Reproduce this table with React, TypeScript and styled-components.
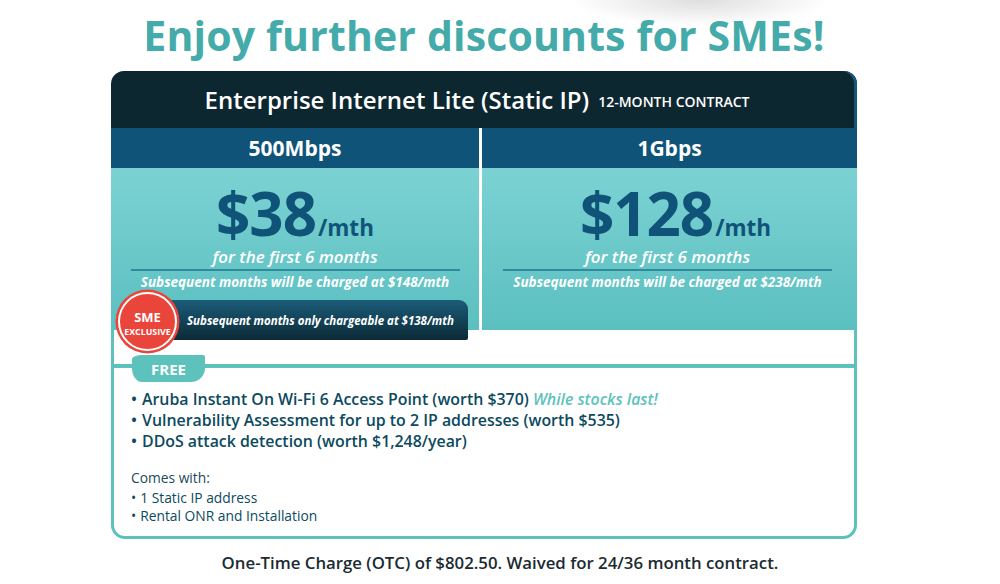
import styled, { createGlobalStyle } from 'styled-components';

const GlobalStyle = createGlobalStyle`
  html, body {
    margin: 0;
    padding: 0;
    background: #fff;
  }
  body {
    font-family: "Open Sans", "Noto Sans", Arial, sans-serif;
  }
`;

const Page = styled.div`
  width: 1000px;
  height: 584px;
  overflow: hidden;
  background: radial-gradient(ellipse 130px 26px at 700px 0px, rgba(0, 0, 0, 0.13), rgba(0, 0, 0, 0) 100%), #fff;
`;

const Column = styled.div`
  width: 746px;
  margin-left: 111px;
`;

const Title = styled.h1`
  margin: 0;
  padding-top: 10px;
  height: 71px;
  box-sizing: border-box;
  text-align: center;
  font-size: 41px;
  line-height: 50px;
  font-weight: 700;
  color: #44abaa;
  letter-spacing: 0.15px;
`;

const Card = styled.div`
  display: flex;
  flex-direction: column;
`;

const Header = styled.div`
  height: 57px;
  display: flex;
  align-items: center;
  justify-content: center;
  gap: 9px;
  padding-right: 14px;
  background: #0d2730;
  border-radius: 13px 13px 0 0;
  box-shadow: inset -3px 0 0 #14577c;
  color: #fff;
`;

const HeaderTitle = styled.span`
  font-size: 24px;
  font-weight: 600;
`;

const Contract = styled.span`
  font-size: 14px;
  font-weight: 600;
  margin-top: 4px;
`;

const Plans = styled.div`
  display: grid;
  grid-template-columns: 368px 375px;
  gap: 3px;
  background: #fff;
`;

const Plan = styled.div`
  display: flex;
  flex-direction: column;
`;

const Speed = styled.div`
  height: 40px;
  display: flex;
  align-items: center;
  justify-content: center;
  background: #0f5478;
  color: #fff;
  font-size: 21px;
  font-weight: 700;
`;

const PriceBox = styled.div<{ $nudge: number }>`
  height: 162px;
  display: flex;
  flex-direction: column;
  align-items: center;
  background: linear-gradient(to bottom, #7cd2d3, #5bbfc0);
  padding: 13px ${(p) => p.$nudge}px 0 0;
  box-sizing: border-box;
`;

const Price = styled.div<{ $shift: number }>`
  color: #0f5478;
  font-weight: 700;
  line-height: 65px;
  height: 65px;
  margin-left: ${(p) => p.$shift}px;
  white-space: nowrap;
`;

const Amount = styled.span`
  font-size: 60px;
  letter-spacing: -1px;
`;

const Per = styled.span`
  font-size: 22.5px;
  line-height: 1;
  margin-left: 2px;
`;

const FirstMonths = styled.div`
  color: #fff;
  font-size: 17px;
  font-style: italic;
  font-weight: 600;
  line-height: 22px;
`;

const Rule = styled.div`
  width: 329px;
  height: 2px;
  flex-shrink: 0;
  background: #2f8a9a;
  margin-top: 1px;
`;

const Later = styled.div`
  color: #fff;
  font-size: 13.5px;
  font-style: italic;
  font-weight: 700;
  line-height: 20px;
  margin-top: 1px;
  white-space: nowrap;
`;

const ExclusiveBar = styled.div`
  position: relative;
  z-index: 1;
  flex-shrink: 0;
  align-self: stretch;
  margin: auto 11px -10px 54px;
  height: 40px;
  display: flex;
  align-items: center;
  padding-left: 22px;
  border-radius: 0 9px 2px 0;
  background: linear-gradient(to bottom, #1b5c79, #0c2a36);
`;

const ExclusiveText = styled.span`
  color: #fff;
  font-size: 11.5px;
  font-style: italic;
  font-weight: 700;
  white-space: nowrap;
`;

const Badge = styled.div`
  position: absolute;
  left: -47px;
  top: -8px;
  width: 55px;
  height: 55px;
  border-radius: 50%;
  background: #e9453b;
  border: 2px solid #fff;
  box-shadow: 0 0 0 2.5px #e9453b;
  display: flex;
  flex-direction: column;
  align-items: center;
  justify-content: center;
  color: #fff;
  font-weight: 700;
  line-height: normal;
`;

const BadgeBig = styled.span`
  font-size: 13px;
  margin-top: 2px;
`;

const BadgeSmall = styled.span`
  font-size: 8.8px;
`;

const Perks = styled.div`
  border: 3px solid #5ec2bc;
  border-top: none;
  border-radius: 0 0 14px 14px;
  padding: 25px 0 11px;
`;

const FreeRow = styled.div`
  height: 27px;
  background: linear-gradient(
    to bottom,
    transparent 9px,
    #5ec2bc 9px,
    #5ec2bc 13px,
    transparent 13px
  );
`;

const FreeTab = styled.div`
  width: 73px;
  height: 27px;
  margin-left: 18px;
  display: flex;
  align-items: center;
  justify-content: center;
  background: #5ec2bc;
  border-radius: 10px 2px 14px 10px / 4px 2px 14px 14px;
  color: #fff;
  font-size: 15px;
  font-weight: 700;
`;

const Bullets = styled.ul`
  list-style: none;
  margin: 7px 0 0 17px;
  padding: 0;
  color: #0c4a60;
  font-size: 15.9px;
  font-weight: 600;
  line-height: 21px;
`;

const Bullet = styled.li`
  &::before {
    content: '•';
    margin-right: 5px;
  }
`;

const Note = styled.em`
  color: #5ec2bc;
`;

const ComesWith = styled.div`
  margin: 17px 0 0 17px;
  color: #1a4a5a;
  font-size: 13.8px;
  line-height: 18px;
`;

const SmallList = styled.ul`
  list-style: none;
  margin: 2px 0 0 17px;
  padding: 0;
  color: #0c4a60;
  font-size: 13.8px;
  line-height: 18px;
`;

const SmallItem = styled.li`
  &::before {
    content: '•';
    margin-right: 4px;
  }
`;

const Footer = styled.div`
  margin-top: 13px;
  text-align: center;
  color: #1b2b31;
  font-size: 16.8px;
  font-weight: 600;
  line-height: 22px;
`;

type PlanData = {
  speed: string;
  amount: string;
  later: string;
  exclusive?: string;
};

const plans: PlanData[] = [
  {
    speed: '500Mbps',
    amount: '$38',
    later: 'Subsequent months will be charged at $148/mth',
    exclusive: 'Subsequent months only chargeable at $138/mth',
  },
  {
    speed: '1Gbps',
    amount: '$128',
    later: 'Subsequent months will be charged at $238/mth',
  },
];

const App = () => (
  <>
    <GlobalStyle />
    <Page>
      <Column>
        <Title>Enjoy further discounts for SMEs!</Title>
        <Card>
          <Header>
            <HeaderTitle>Enterprise Internet Lite (Static IP)</HeaderTitle>
            <Contract>12-MONTH CONTRACT</Contract>
          </Header>
          <Plans>
            {plans.map((plan) => (
              <Plan key={plan.speed}>
                <Speed>{plan.speed}</Speed>
                <PriceBox $nudge={plan.exclusive ? 0 : 4}>
                  <Price $shift={plan.exclusive ? 0 : 16}>
                    <Amount>{plan.amount}</Amount>
                    <Per>/mth</Per>
                  </Price>
                  <FirstMonths>for the first 6 months</FirstMonths>
                  <Rule />
                  <Later>{plan.later}</Later>
                  {plan.exclusive && (
                    <ExclusiveBar>
                      <Badge>
                        <BadgeBig>SME</BadgeBig>
                        <BadgeSmall>EXCLUSIVE</BadgeSmall>
                      </Badge>
                      <ExclusiveText>{plan.exclusive}</ExclusiveText>
                    </ExclusiveBar>
                  )}
                </PriceBox>
              </Plan>
            ))}
          </Plans>
          <Perks>
            <FreeRow>
              <FreeTab>FREE</FreeTab>
            </FreeRow>
            <Bullets>
              <Bullet>
                Aruba Instant On Wi-Fi 6 Access Point (worth $370) <Note>While stocks last!</Note>
              </Bullet>
              <Bullet>Vulnerability Assessment for up to 2 IP addresses (worth $535)</Bullet>
              <Bullet>DDoS attack detection (worth $1,248/year)</Bullet>
            </Bullets>
            <ComesWith>Comes with:</ComesWith>
            <SmallList>
              <SmallItem>1 Static IP address</SmallItem>
              <SmallItem>Rental ONR and Installation</SmallItem>
            </SmallList>
          </Perks>
        </Card>
      </Column>
      <Footer>One-Time Charge (OTC) of $802.50. Waived for 24/36 month contract.</Footer>
    </Page>
  </>
);

export default App;
